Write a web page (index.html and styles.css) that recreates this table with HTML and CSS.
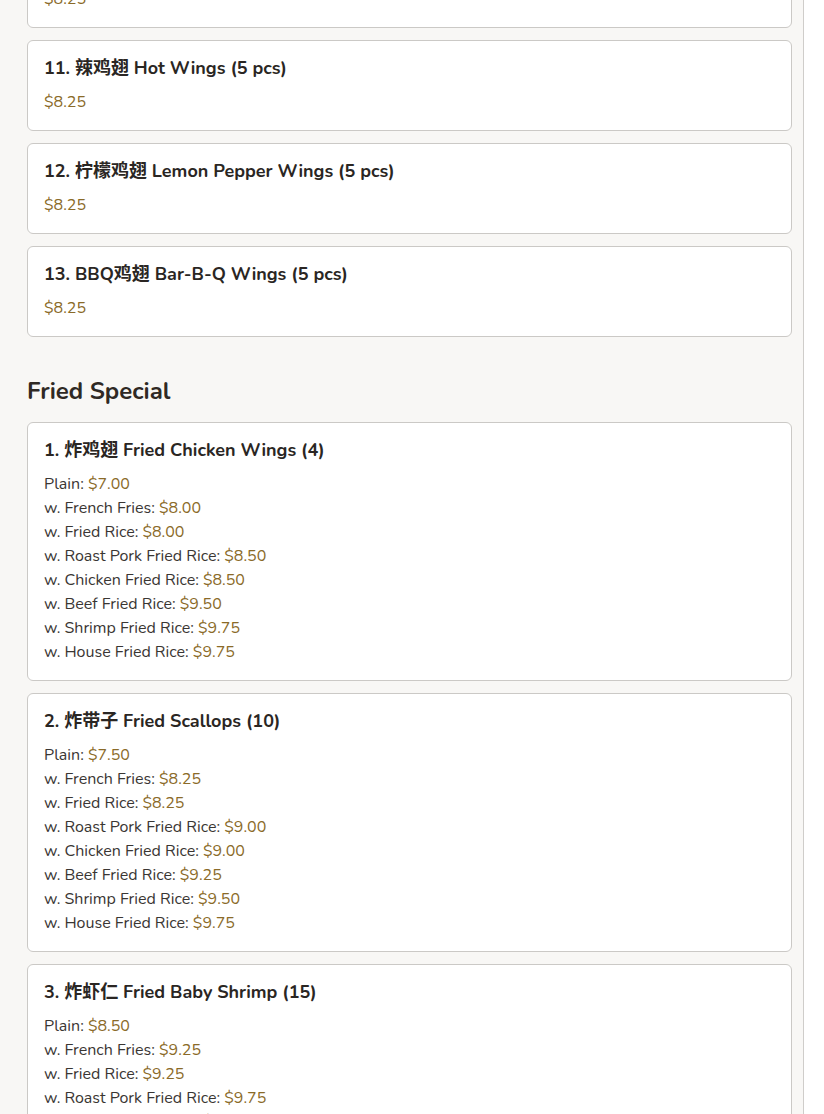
FILE: index.html
```html
<!DOCTYPE html>
<html lang="en">
<head>
<meta charset="utf-8">
<title>Menu</title>
<link rel="stylesheet" href="styles.css">
</head>
<body>
<div class="page">
  <main class="menu">
    <div class="list list-shifted">
      <div class="card">
        <h3 class="item-title">10. 蜜糖鸡翅 Honey Wings (5 pcs)</h3>
        <div class="price">$8.25</div>
      </div>
      <div class="card">
        <h3 class="item-title">11. 辣鸡翅 Hot Wings (5 pcs)</h3>
        <div class="price">$8.25</div>
      </div>
      <div class="card">
        <h3 class="item-title">12. 柠檬鸡翅 Lemon Pepper Wings (5 pcs)</h3>
        <div class="price">$8.25</div>
      </div>
      <div class="card">
        <h3 class="item-title">13. BBQ鸡翅 Bar-B-Q Wings (5 pcs)</h3>
        <div class="price">$8.25</div>
      </div>
    </div>

    <h2 class="section-title">Fried Special</h2>

    <div class="list">
      <div class="card">
        <h3 class="item-title">1. 炸鸡翅 Fried Chicken Wings (4)</h3>
        <ul class="options">
          <li>Plain: <span class="price">$7.00</span></li>
          <li>w. French Fries: <span class="price">$8.00</span></li>
          <li>w. Fried Rice: <span class="price">$8.00</span></li>
          <li>w. Roast Pork Fried Rice: <span class="price">$8.50</span></li>
          <li>w. Chicken Fried Rice: <span class="price">$8.50</span></li>
          <li>w. Beef Fried Rice: <span class="price">$9.50</span></li>
          <li>w. Shrimp Fried Rice: <span class="price">$9.75</span></li>
          <li>w. House Fried Rice: <span class="price">$9.75</span></li>
        </ul>
      </div>
      <div class="card">
        <h3 class="item-title">2. 炸带子 Fried Scallops (10)</h3>
        <ul class="options">
          <li>Plain: <span class="price">$7.50</span></li>
          <li>w. French Fries: <span class="price">$8.25</span></li>
          <li>w. Fried Rice: <span class="price">$8.25</span></li>
          <li>w. Roast Pork Fried Rice: <span class="price">$9.00</span></li>
          <li>w. Chicken Fried Rice: <span class="price">$9.00</span></li>
          <li>w. Beef Fried Rice: <span class="price">$9.25</span></li>
          <li>w. Shrimp Fried Rice: <span class="price">$9.50</span></li>
          <li>w. House Fried Rice: <span class="price">$9.75</span></li>
        </ul>
      </div>
      <div class="card">
        <h3 class="item-title">3. 炸虾仁 Fried Baby Shrimp (15)</h3>
        <ul class="options">
          <li>Plain: <span class="price">$8.50</span></li>
          <li>w. French Fries: <span class="price">$9.25</span></li>
          <li>w. Fried Rice: <span class="price">$9.25</span></li>
          <li>w. Roast Pork Fried Rice: <span class="price">$9.75</span></li>
          <li>w. Chicken Fried Rice: <span class="price">$9.75</span></li>
          <li>w. Beef Fried Rice: <span class="price">$10.25</span></li>
          <li>w. Shrimp Fried Rice: <span class="price">$10.50</span></li>
          <li>w. House Fried Rice: <span class="price">$10.75</span></li>
        </ul>
      </div>
    </div>
  </main>
</div>
</body>
</html>
```

FILE: styles.css
```css
* { box-sizing: border-box; }

html, body {
  margin: 0;
  padding: 0;
  background: #ffffff;
  font-family: "Nunito", "Open Sans", "Noto Sans", "Noto Sans CJK SC", sans-serif;
  color: #2e2a27;
  overflow: hidden;
}

.page {
  width: 804px;
  min-height: 1114px;
  background: #f8f7f5;
  border-right: 1px solid #cfcdca;
}

.menu {
  padding: 0 11px 40px 27px;
}

.list {
  display: flex;
  flex-direction: column;
  gap: 12px;
}

.list-shifted {
  margin-top: -63px;
}

.card {
  background: #ffffff;
  border: 1px solid #cbc9c6;
  border-radius: 6px;
  padding: 16px 16px 16px;
}

.item-title {
  margin: 0 0 11px;
  font-size: 18px;
  line-height: 22px;
  font-weight: 700;
  color: #2a2623;
}

.price {
  font-size: 16px;
  line-height: 24px;
  color: #8a6a28;
}

.section-title {
  margin: 40px 0 16px;
  font-size: 24px;
  line-height: 29px;
  font-weight: 700;
  color: #2f2924;
}

.options {
  list-style: none;
  margin: 0;
  padding: 0;
}

.options li {
  font-size: 16px;
  line-height: 24px;
  color: #3a3633;
}
```
